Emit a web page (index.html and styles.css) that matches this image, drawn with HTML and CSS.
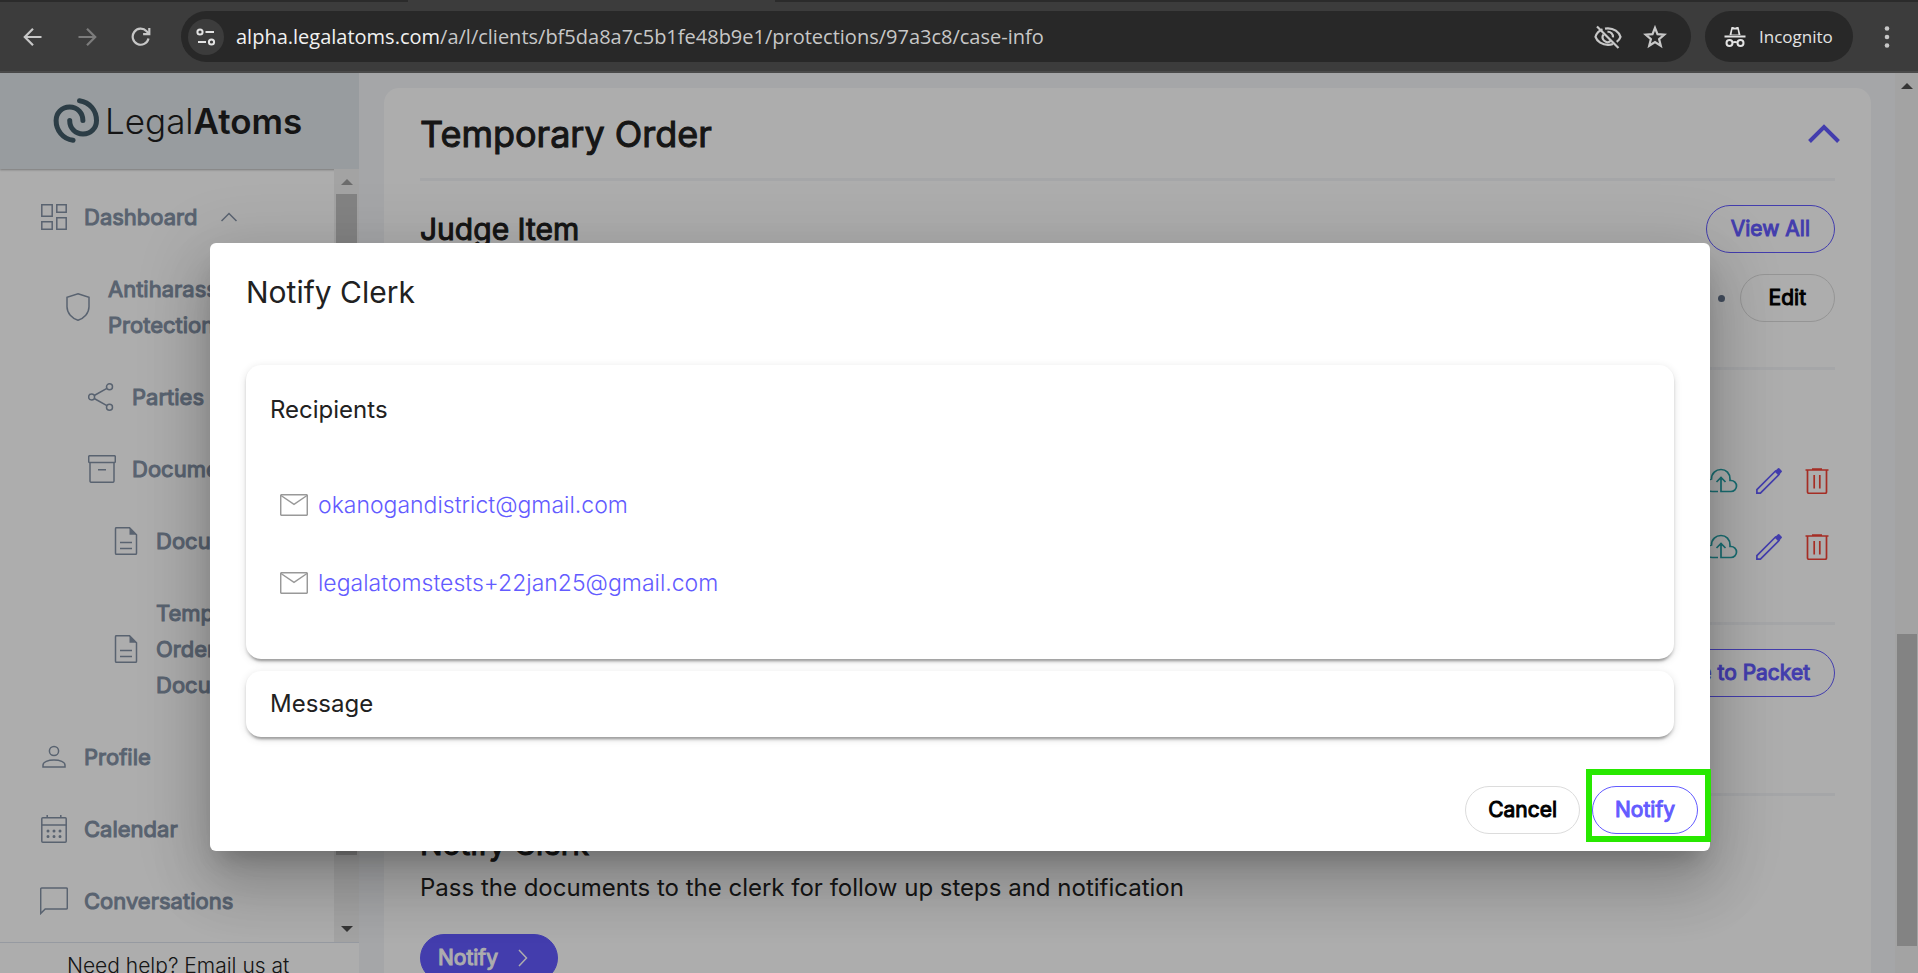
FILE: index.html
```html
<!DOCTYPE html>
<html lang="en">
<head>
<meta charset="utf-8">
<title>LegalAtoms</title>
<link rel="stylesheet" href="styles.css">
</head>
<body>
<svg class="sprite" aria-hidden="true">
  <symbol id="i-mail" viewBox="0 0 28 22"><rect x=".7" y=".7" width="26.6" height="20.6" rx="1"/><path d="M1 1.5 14 10.300 27 1.500"/></symbol>
  <symbol id="i-doc" viewBox="0 0 28 28"><path d="M4.500.7h13l7 7v18.600a1 1 0 0 1-1 1h-19a1 1 0 0 1-1-1V1.700a1 1 0 0 1 1-1z"/><path class="solid" d="M17.500.7v7h7z"/><path d="M8 15.500h12M8 21.500h12"/></symbol>
  <symbol id="i-cloud" viewBox="0 0 34 26"><path d="M14 23.500H8.500a6.300 6.300 0 0 1-1-12.500C7.500 5.500 11.800 1.500 17 1.500s9 4 9 9.500v1.500h1a5.500 5.500 0 0 1 0 11h-10V9.500M12.500 14 17 9.500 21.500 14"/></symbol>
  <symbol id="i-pencil" viewBox="0 0 26 26"><path d="M20 2.500.9 21.600V25.100H4.400L23.500 6"/><path class="solid" d="M18.500 3.500 22 .3a1 1 0 0 1 1.300 0l2.400 2.400a1 1 0 0 1 0 1.300L22.500 7.500z"/></symbol>
  <symbol id="i-trash" viewBox="0 0 24 26"><path d="M.5 2h23M7 1h10M2.500 2v22a1.300 1.300 0 0 0 1.300 1.300h16.400a1.300 1.300 0 0 0 1.300-1.300V2M9.200 7v13.500M14.800 7v13.500"/></symbol>
</svg>

<header class="browser">
  <div class="tabstrip"><span class="tab"></span></div>
  <div class="toolbar">
    <button class="tool" aria-label="Back"><svg width="20" height="20" viewBox="0 0 20 20"><path d="M18.500 10H2M10 1.800 1.800 10l8.200 8.200"/></svg></button>
    <button class="tool dim" aria-label="Forward"><svg width="20" height="20" viewBox="0 0 20 20"><path d="M1.500 10H18M10 1.800 18.200 10 10 18.200"/></svg></button>
    <button class="tool" aria-label="Reload"><svg width="20" height="20" viewBox="0 0 20 20"><path d="M17.500 11.500A8 8 0 1 1 15.600 4.300L18 6.800"/><path d="M18.300 1v6.200h-6.200"/></svg></button>
    <div class="omnibox">
      <button class="site" aria-label="Site information"><svg width="20" height="20" viewBox="0 0 20 20"><circle cx="4" cy="5" r="2.600"/><path d="M9.500 5H18M2 15h8"/><circle cx="15.500" cy="15" r="2.600"/></svg></button>
      <span class="url"><b>alpha.legalatoms.com</b>/a/l/clients/bf5da8a7c5b1fe48b9e1/protections/97a3c8/case-info</span>
      <button class="omni-btn" aria-label="Third-party cookies blocked"><svg width="28" height="24" viewBox="0 0 28 24"><path d="M8.500 4.300C4.500 6 2.200 9.400 1.500 11.800c1.600 4.700 6.700 8 12.500 8 1.800 0 3.500-.3 5-.9M11 3.600c1-.2 2-.3 3-.3 5.800 0 10.900 3.500 12.500 8.500-.7 2-2 3.700-3.800 5.100"/><path d="M9.300 9.600a5 5 0 0 0 7.200 6.600M13.500 6.800a5 5 0 0 1 5.500 5.500M3 1.500 24.500 23"/></svg></button>
      <button class="omni-btn" aria-label="Bookmark this tab"><svg width="24" height="24" viewBox="0 0 24 24"><path d="M12 2.800 14.500 9.200l6.800.5-5.200 4.400 1.700 6.700-5.800-3.700-5.800 3.700 1.700-6.700-5.200-4.400 6.800-.5z"/></svg></button>
    </div>
    <div class="incognito">
      <svg width="22" height="22" viewBox="0 0 22 22"><path class="solid" d="M7.500 1h1.500l2 .7 2-.7h1.500l2 8h-11z"/><path class="cut" d="M8.500 3.500h5l1 5h-7z"/><path d="M.5 10.500h21M9 16.500q2-1.200 4 0"/><circle cx="5.500" cy="17" r="3"/><circle cx="16.500" cy="17" r="3"/></svg>
      <span>Incognito</span>
    </div>
    <button class="kebab" aria-label="Menu"><svg width="6" height="24" viewBox="0 0 6 24"><circle cx="3" cy="3.500" r="2.300"/><circle cx="3" cy="12" r="2.300"/><circle cx="3" cy="20.500" r="2.300"/></svg></button>
  </div>
</header>

<div class="app">
  <aside class="sidebar">
    <a class="brand" href="#">
      <svg width="46" height="46" viewBox="0 0 46 46"><path d="M26.500 2.700C37 4 43.500 13 43.500 22.500 43.500 30 38 36 30 36S16.700 30 16.700 22.500M20.100 42.300C9.600 41 3.100 32 3.100 22.500 3.100 15 8.600 9 16.600 9S29.900 15 29.900 22.500"/></svg>
      <span>Legal<b>Atoms</b></span>
    </a>
    <div class="nav-wrap">
      <nav class="nav">
        <a class="item" href="#"><svg class="ic" viewBox="0 0 28 28"><path d="M1.800 1.800h10.400v11.400H1.800zM16.800 1.800h9.400v7.400h-9.400zM1.800 18.800h10.400v7.400H1.800zM16.800 14.800h9.400v11.400h-9.400z"/></svg><span>Dashboard</span><svg class="caret" width="16" height="10" viewBox="0 0 16 10"><path d="M.5 9 8 1.500 15.500 9"/></svg></a>
        <a class="item l1" href="#"><svg class="ic" viewBox="0 0 28 28"><path d="M14 .8 25 4.300v9.500c0 6.500-5 11.500-11 13.500C8 25.300 3 20.300 3 13.800V4.300z"/></svg><span>Antiharassment<br>Protection</span></a>
        <a class="item l2" href="#"><svg class="ic" viewBox="0 0 28 28"><circle cx="3.600" cy="14" r="3"/><circle cx="21.500" cy="3.800" r="3"/><circle cx="21.500" cy="24.200" r="3"/><path d="M6.200 12.500 18.900 5.300M6.200 15.500 18.900 22.700"/></svg><span>Parties</span></a>
        <a class="item l2" href="#"><svg class="ic" viewBox="0 0 28 28"><rect x=".7" y=".7" width="26.600" height="6.800" rx="1"/><path d="M2 7.500V26a1.300 1.300 0 0 0 1.300 1.300h21.400A1.300 1.300 0 0 0 26 26V7.500M10 14.700h8"/></svg><span>Documents</span></a>
        <a class="item l3" href="#"><svg class="ic"><use href="#i-doc"/></svg><span>Documents</span></a>
        <a class="item l3" href="#"><svg class="ic"><use href="#i-doc"/></svg><span>Temporary<br>Orders<br>Documents</span></a>
        <a class="item" href="#"><svg class="ic" viewBox="0 0 28 28"><circle cx="14" cy="8" r="4.600"/><path d="M3 24v-2c0-3 5-5 11-5s11 2 11 5v2z"/></svg><span>Profile</span></a>
        <a class="item" href="#"><svg class="ic" viewBox="0 0 28 28"><rect x="1.800" y="2.800" width="24.400" height="24.400" rx="1"/><path d="M1.800 10h24.400M7.200 0v3M20.800 0v3"/><path class="dots" d="M8 16h.01M14 16h.01M20 16h.01M8 21.500h.01M14 21.500h.01M20 21.500h.01"/></svg><span>Calendar</span></a>
        <a class="item" href="#"><svg class="ic" viewBox="0 0 28 28"><path d="M.7 26.500V2a1 1 0 0 1 1-1h24.600a1 1 0 0 1 1 1v19a1 1 0 0 1-1 1H5.200z"/></svg><span>Conversations</span></a>
      </nav>
      <div class="scrollbar side-scroll"><i class="up"></i><i class="thumb"></i><i class="down"></i></div>
    </div>
    <p class="help">Need help? Email us at</p>
  </aside>

  <main class="main">
    <section class="card">
      <header class="card-head"><h1>Temporary Order</h1><button class="plain" aria-label="Collapse"><svg width="32" height="20" viewBox="0 0 32 20"><path d="M1.500 17.500 16 3 30.500 17.500"/></svg></button></header>
      <div class="block judge">
        <div class="row"><h2>Judge Item</h2><button class="pill accent">View All</button></div>
        <div class="row end"><span class="bullet"></span><button class="pill edit">Edit</button></div>
      </div>
      <div class="block files">
        <div class="file"><button class="plain teal" aria-label="Upload"><svg width="34" height="26"><use href="#i-cloud"/></svg></button><button class="plain violet" aria-label="Edit"><svg width="26" height="26"><use href="#i-pencil"/></svg></button><button class="plain red" aria-label="Delete"><svg width="24" height="26"><use href="#i-trash"/></svg></button></div>
        <div class="file"><button class="plain teal" aria-label="Upload"><svg width="34" height="26"><use href="#i-cloud"/></svg></button><button class="plain violet" aria-label="Edit"><svg width="26" height="26"><use href="#i-pencil"/></svg></button><button class="plain red" aria-label="Delete"><svg width="24" height="26"><use href="#i-trash"/></svg></button></div>
      </div>
      <div class="block packet"><div class="row end"><button class="pill accent">Save to Packet</button></div></div>
      <div class="block clerk">
        <h2>Notify Clerk</h2>
        <p>Pass the documents to the clerk for follow up steps and notification</p>
        <button class="pill filled">Notify <svg width="10" height="18" viewBox="0 0 10 18"><path d="M1 1l7.500 8L1 17"/></svg></button>
      </div>
    </section>
  </main>
  <div class="scrollbar page-scroll"><i class="up"></i><i class="thumb"></i></div>

  <div class="backdrop">
    <div class="dialog" role="dialog" aria-labelledby="dlg-title">
      <h2 id="dlg-title">Notify Clerk</h2>
      <section class="panel recipients">
        <h3>Recipients</h3>
        <ul>
          <li><svg width="28" height="22"><use href="#i-mail"/></svg><a href="#">okanogandistrict@gmail.com</a></li>
          <li><svg width="28" height="22"><use href="#i-mail"/></svg><a href="#">legalatomstests+22jan25@gmail.com</a></li>
        </ul>
      </section>
      <section class="panel"><h3>Message</h3></section>
      <footer class="actions">
        <button class="pill">Cancel</button>
        <div class="marked"><button class="pill accent">Notify</button></div>
      </footer>
    </div>
  </div>
</div>
</body>
</html>
```
FILE: styles.css
```css
* { box-sizing: border-box; }
body {
  margin: 0;
  height: 100vh;
  display: flex;
  flex-direction: column;
  overflow: hidden;
  font: 400 24px/36px Inter, "Liberation Sans", sans-serif;
  font-optical-sizing: none;
  color: #212121;
}
h1, h2, h3, p, ul { margin: 0; padding: 0; }
ul { list-style: none; }
a { color: inherit; text-decoration: none; }
button { font: inherit; color: inherit; padding: 0; border: 0; background: none; }
svg { display: block; flex: none; fill: none; stroke: currentColor; stroke-width: 1.5; }
.solid { fill: currentColor; stroke: none; }
.sprite { position: absolute; width: 0; height: 0; }

/* Browser chrome */
.browser { flex: none; background: #3c3c3c; border-bottom: 2px solid #4a4a4a; color: #c7c7c7; font-family: "Open Sans", "Noto Sans", sans-serif; }
.tabstrip { height: 2px; background: #2b2b2b; padding-left: 408px; }
.tab { display: block; width: 367px; height: 2px; background: #3c3c3c; }
.toolbar { display: flex; align-items: center; height: 69px; padding: 0 28px 0 23px; }
.tool { margin-right: 34px; }
.tool svg { stroke-width: 2.2; }
.dim { color: #7c7c7c; }
.tool + .omnibox { margin-left: -4px; }
.omnibox { flex: 1; display: flex; align-items: center; height: 51px; padding: 0 24px 0 7px; border-radius: 26px; background: #282828; }
.site { width: 36px; height: 36px; border-radius: 50%; background: #3c3c3c; display: grid; place-items: center; color: #e3e3e3; }
.site svg { stroke-width: 2; }
.url { flex: 1; margin-left: 12px; font-size: 20px; line-height: 28px; }
.url b { font-weight: 400; color: #f1f1f1; }
.omni-btn { margin-left: 21px; }
.omni-btn svg { stroke-width: 2.2; }
.incognito { display: flex; align-items: center; gap: 13px; height: 51px; width: 148px; padding-left: 19px; margin-left: 14px; border-radius: 26px; background: #282828; color: #e3e3e3; font-size: 17px; }
.incognito svg { stroke-width: 2; }
.incognito .cut { fill: #282828; stroke: none; }
.kebab { margin-left: 31px; }
.kebab circle { fill: currentColor; stroke: none; }

.app { flex: 1; min-height: 0; display: flex; position: relative; }

/* Sidebar */
.sidebar { width: 359px; display: flex; flex-direction: column; background: #fff; }
.brand { flex: none; height: 96px; display: flex; align-items: center; gap: 6px; padding-left: 53px; background: #e0e6ea; color: #1f1f1f; font-size: 35px; font-weight: 300; box-shadow: 0 1px 2px rgba(0, 0, 0, .3); }
.brand svg { stroke: #425b67; stroke-width: 5; stroke-linecap: round; }
.brand b { font-weight: 600; }
.nav-wrap { flex: 1; min-height: 0; display: flex; }
.nav { flex: 1; padding-top: 12px; overflow: hidden; color: #8492a6; font-size: 22px; -webkit-text-stroke: 1px currentColor; }
.item { display: flex; align-items: center; gap: 16px; padding: 18px 0 18px 40px; }
.l1 { padding-left: 64px; }
.l2 { padding-left: 88px; }
.l3 { padding-left: 112px; }
.ic { width: 28px; height: 28px; }
.dots { stroke-width: 3; stroke-linecap: round; }
.caret { margin-left: 8px; }
.help { flex: none; height: 31px; padding: 5px 0 0 67px; border-top: 1px solid #dde3ee; font-size: 21px; font-weight: 300; overflow: hidden; }

.scrollbar { flex: none; display: flex; flex-direction: column; align-items: center; background: #f1f1f1; }
.up, .down { width: 0; height: 0; border: 6px solid transparent; }
.up { border-bottom-color: #505050; border-top: 0; }
.down { border-top-color: #505050; border-bottom: 0; margin-top: auto; }
.thumb { background: #c1c1c1; }
.side-scroll { width: 25px; padding: 10px 0; }
.side-scroll .up { border-bottom-color: #a0a0a0; }
.side-scroll .thumb { width: 21px; flex: 1; margin: 9px 0 71px; }
.page-scroll { width: 23px; padding: 10px 0 27px; }
.page-scroll .thumb { width: 20px; height: 312px; margin-top: auto; }

/* Content */
.main { flex: 1; min-width: 0; padding: 15px 24px 0 25px; background: #f3f5f8; overflow: hidden; }
.card { padding: 0 36px 80px; border-radius: 15px; background: #fff; }
.card-head, .row { display: flex; align-items: center; justify-content: space-between; }
.card-head { height: 90px; padding-top: 2px; }
.card-head svg { stroke: #635bff; stroke-width: 4; margin-right: -5px; }
h1 { font-size: 36px; line-height: 48px; font-weight: 400; -webkit-text-stroke: 1px currentColor; }
.card h2 { font-size: 30px; line-height: 48px; font-weight: 400; -webkit-text-stroke: 1px currentColor; }
.row.end { justify-content: flex-end; }
.block { border-top: 3px solid #f3f5f8; }
.judge { padding: 24px 0 45px; }
.judge .end { margin-top: 21px; gap: 15px; }
.bullet { width: 7px; height: 7px; border-radius: 50%; background: #64748b; }
.files { padding: 78px 6px 42px 0; }
.file { height: 66px; display: flex; align-items: center; justify-content: flex-end; gap: 23px; }
.file .teal { color: #26a2a9; margin-right: -5px; }
.violet { color: #635bff; }
.red { color: #f44336; }
.file svg { stroke-width: 1.7; }
.packet { padding: 24px 0 96px; }
.clerk { padding-top: 24px; }
.clerk p { margin: 2px 0 28px; }

.pill { display: inline-flex; align-items: center; height: 48px; padding: 0 23px; border: 1px solid #dcdcdc; border-radius: 24px; color: #000; font-size: 21px; -webkit-text-stroke: 1px currentColor; }
.pill.accent { border-color: #635bff; color: #635bff; }
.row .pill.accent { padding: 0 24px; }
.pill.edit { padding: 0 28px; }
.pill.filled { gap: 20px; padding: 0 29px 0 17px; border-color: #635bff; background: #635bff; color: #fff; }
.plain { display: block; }

/* Modal */
.backdrop { position: absolute; inset: 0; display: flex; justify-content: center; align-items: flex-start; padding: 170px 23px 0 25px; background: rgba(0, 0, 0, .32); }
.dialog { width: 100%; max-width: 1500px; padding: 30px 36px 17px; border-radius: 6px; background: #fff; box-shadow: 0 16px 22px -10px rgba(0, 0, 0, .2), 0 36px 57px 4px rgba(0, 0, 0, .14), 0 14px 69px 12px rgba(0, 0, 0, .12); }
.dialog h2 { font-size: 30px; line-height: 38px; font-weight: 400; margin-bottom: 54px; }
.panel { padding: 15px 24px; border-radius: 15px; background: #fff; box-shadow: 0 5px 2px -3px rgba(0, 0, 0, .2), 0 3px 3px rgba(0, 0, 0, .14), 0 2px 8px rgba(0, 0, 0, .12); }
.panel h3 { font-size: 24px; line-height: 36px; font-weight: 400; }
.panel + .panel { margin-top: 12px; }
.recipients { padding: 27px 24px 37px 24px; }
.recipients ul { margin-top: 38px; }
.recipients li { display: flex; align-items: center; gap: 10px; height: 78px; padding-left: 10px; color: #999; }
.recipients a { color: #635bff; font-size: 23px; font-weight: 300; }
.actions { display: flex; justify-content: flex-end; align-items: center; gap: 12px; margin: 49px -24px 0 0; }
.actions .pill { padding: 0 22px; }
.marked { position: relative; display: flex; }
.marked::after { content: ""; position: absolute; inset: -17px -13px -8px -6px; border: 6px solid #28e800; }
```
